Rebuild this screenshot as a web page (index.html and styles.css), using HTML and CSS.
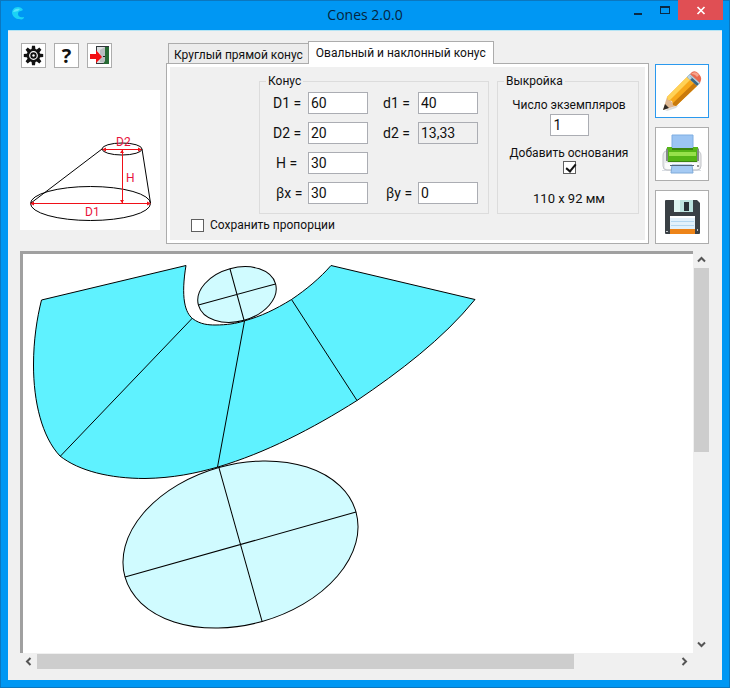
FILE: index.html
```html
<!DOCTYPE html>
<html lang="ru">
<head>
<meta charset="utf-8">
<meta name="viewport" content="width=device-width, initial-scale=1">
<title>Cones 2.0.0</title>
<link rel="stylesheet" href="styles.css">
</head>
<body>
<div class="window">
  <header class="titlebar">
    <svg class="app-icon" width="14" height="14" viewBox="0 0 14 14" aria-hidden="true">
      <path d="M6 0C2 0 0 3 0 6c1 4 4 6 7 6 3 1 5 0 5-2-4 1-6-1-6-3 0-2 1-3 3-3l2-1C10 1 8 0 6 0Z" fill="#1bd3f5"/>
      <path d="M1 5c1-3 4-4 7-3L6 4C5 4 3 5 1 5Z" fill="#59e6fa"/>
    </svg>
    <h1 class="title">Cones 2.0.0</h1>
    <div class="window-buttons">
      <button class="win-btn" type="button" aria-label="Свернуть">
        <svg width="10" height="10" viewBox="0 0 10 10"><path d="M1 8h8v2H1z" fill="#0a2a44"/></svg>
      </button>
      <button class="win-btn" type="button" aria-label="Развернуть">
        <svg width="10" height="10" viewBox="0 0 10 10"><path d="M0 1h10v8H0zM1 3v5h8V3z" fill="#0a2a44" fill-rule="evenodd"/></svg>
      </button>
      <button class="win-btn win-close" type="button" aria-label="Закрыть">
        <svg width="10" height="10" viewBox="0 0 10 10"><path d="M1.500 2l7 7M8.500 2l-7 7" stroke="#fff" stroke-width="1.700"/></svg>
      </button>
    </div>
  </header>

  <main class="client">
    <div class="controls">
      <div class="side">
        <div class="toolbar">
          <button class="tool-btn" type="button" aria-label="Настройки">
            <svg width="21" height="21" viewBox="0 0 21 21">
              <g fill="#111" transform="translate(10.500 10.500)">
                <g id="teeth"><path d="M-1.500-9.700h3l.6 4.700h-4.200zM-1.500 9.700h3l.6-4.700h-4.200z"/><path d="M-9.700-1.500v3l4.700.6v-4.200zM9.700-1.500v3l-4.700.6v-4.200z"/></g>
                <use href="#teeth" transform="rotate(45)"/>
                <circle r="6.800"/>
              </g>
              <circle cx="10.500" cy="10.500" r="3.800" fill="none" stroke="#fff" stroke-width="1.200"/>
              <circle cx="10.500" cy="10.500" r="1.200" fill="#fff"/>
            </svg>
          </button>
          <button class="tool-btn tool-help" type="button" aria-label="Справка">?</button>
          <button class="tool-btn" type="button" aria-label="Выход">
            <svg width="21" height="21" viewBox="0 0 21 21">
              <path d="M7 1h13v18H7z" fill="#30363a"/>
              <path d="M8 2h8v16H8z" fill="#dcdfe0"/>
              <path d="M11 5l5-3v16l-5-1z" fill="#b9bec1"/>
              <path d="M16 2h4v17h-6l2-3z" fill="#286b35"/>
              <path d="M1 9h6V5l6 7-6 6v-4H1z" fill="#f20d12"/>
              <path d="M14 11h2v1h-2z" fill="#222"/>
            </svg>
          </button>
        </div>
        <svg class="scheme" viewBox="0 0 140 140" role="img" aria-label="Схема конуса">
          <g class="scheme-lines">
            <ellipse cx="102" cy="59" rx="20" ry="6"/>
            <ellipse cx="70.500" cy="113.500" rx="60" ry="17"/>
            <path d="M82 59L11 113M122 59l8.500 54"/>
          </g>
          <path class="scheme-dims" d="M83 59.500h38M102 60v53M11 113.500h119"/>
          <path class="scheme-tips" d="M82 59.500l4-2v4zM122 59.500l-4-2v4zM10 113.500l4-2v4zM131 113.500l-4-2v4zM102 60l-2 3h4zM102 113l-2-3h4z"/>
          <g class="scheme-text">
            <text x="96" y="56">D2</text><text x="106" y="92">H</text><text x="65" y="126">D1</text>
          </g>
        </svg>
      </div>

      <section class="tabs">
        <div class="tab-row" role="tablist">
          <button class="tab" type="button" role="tab" aria-selected="false">Круглый прямой конус</button>
          <button class="tab tab-active" type="button" role="tab" aria-selected="true">Овальный и наклонный конус</button>
        </div>
        <div class="tab-panel" role="tabpanel">
          <div class="groups">
            <fieldset class="group group-cone">
              <legend>Конус</legend>
              <div class="fields">
                <label for="D1">D1 =</label><input id="D1" type="text" value="60">
                <label for="d1s">d1 =</label><input id="d1s" type="text" value="40">
                <label for="D2">D2 =</label><input id="D2" type="text" value="20">
                <label for="d2s">d2 =</label><input id="d2s" type="text" value="13,33" readonly>
                <label for="H">H =</label><input id="H" type="text" value="30">
                <label for="bx">βx =</label><input id="bx" type="text" value="30">
                <label for="by">βy =</label><input id="by" type="text" value="0">
              </div>
            </fieldset>
            <fieldset class="group group-pattern">
              <legend>Выкройка</legend>
              <div class="pattern">
                <label for="copies">Число экземпляров</label>
                <input id="copies" class="copies" type="text" value="1">
                <label class="bases-label" for="bases">Добавить основания</label>
                <input id="bases" class="check" type="checkbox" checked>
                <output class="sheet-size">110 x 92 мм</output>
              </div>
            </fieldset>
          </div>
          <label class="keep"><input class="check" type="checkbox">Сохранить пропорции</label>
        </div>
      </section>

      <div class="actions">
        <button class="action action-focus" type="button" aria-label="Построить">
          <svg width="44" height="44" viewBox="0 0 44 44">
            <path d="M5 41l11-4 3-1-3 3-9 3z" fill="#ddd"/>
            <path d="M3 41L7 28l9 9z" fill="#dfb893"/>
            <path d="M3 41l2-6 4 4z" fill="#2d2825"/>
            <path d="M7 28L27 8l10 9-21 20-3-1-1-4-4-1z" fill="#f7a81b"/>
            <path d="M7 28L27 8l3 3L10 31l-2 0z" fill="#ffd257"/>
            <path d="M13 34L34 14l3 3-21 20-3-1z" fill="#c97a0c"/>
            <path d="M27 8l3-3 10 9-3 3z" fill="#3c6681"/>
            <path d="M29 6l1-1 10 9-1 1zM27 8l2-2 3 3-2 2z" fill="#b9d3e2"/>
            <path d="M30 5l2-2q3-2 6 1 4 4 3 7l-1 3z" fill="#e8694f"/>
            <path d="M31 5q3-3 6-1l2 2-2 2q-2-3-6-3z" fill="#f7a38c"/>
          </svg>
        </button>
        <button class="action" type="button" aria-label="Печать">
          <svg width="44" height="44" viewBox="0 0 44 44">
            <path d="M2 38h39v1H2z" fill="#d9dde3"/>
            <path d="M3 24q0-5 4-5h30q4 0 4 5v10q0 4-4 4H7q-4 0-4-4z" fill="#e9eaec" stroke="#c2c4c8"/>
            <path d="M5 31h34v4q0 2-2 2H7q-2 0-2-2z" fill="#fbfbfb"/>
            <path d="M12 3h21v14H12z" fill="#9cc5f3" stroke="#7eaee2"/>
            <path d="M7 15h5v2h21v-2h5v13q0 2-2 2H9q-2 0-2-2z" fill="#55b516"/>
            <path d="M9 20h27v4H9z" fill="#97e14b"/>
            <path d="M12 16h21v2H12zM8 29h29v1H8z" fill="#3a840f"/>
            <path d="M6 16l2 2v11H6zM37 18l2-2v13h-2z" fill="#85898d"/>
            <path d="M12 33h20l1 8H11z" fill="#a5caf3" stroke="#7faad8"/>
            <path d="M10 33h24v1H10z" fill="#526477"/>
            <circle cx="38" cy="34" r="1" fill="#777"/>
          </svg>
        </button>
        <button class="action" type="button" aria-label="Сохранить">
          <svg width="44" height="44" viewBox="0 0 44 44">
            <path d="M6 5h31l3 3v30q0 1-1 1H6q-1 0-1-1V6q0-1 1-1z" fill="#3a4045"/>
            <path d="M14 5h19v12H14z" fill="#bde3df"/>
            <path d="M14 5h6v12h-6z" fill="#dff4f1"/>
            <path d="M24 7h5v9h-5z" fill="#283036"/>
            <path d="M10 21h25v18H10z" fill="#e3f1fb"/>
            <path d="M10 21h25v2H10z" fill="#fff"/>
            <path d="M11 26h23v1H11zM11 30h23v1H11z" fill="#b4d6ef"/>
            <path d="M10 34h25v5H10z" fill="#ed8419"/>
            <path d="M6 36h2v1H6zM37 34h1v2h-1z" fill="#c4c9cd"/>
          </svg>
        </button>
      </div>
    </div>

    <div class="viewer">
      <div class="canvas">
        <svg class="drawing" width="670" height="399" viewBox="23 254 670 399" role="img" aria-label="Выкройка конуса">
          <path class="cone" d="M186 265.500C183.500 280 183 293 184.500 302C186 311 189 315.500 192.500 318.500C200 324.500 209 325 215 325C227 325 236 323.500 244 321C262 316 275 309.500 291.500 299.500C307 289 320 278 331 265.500L475 299.500C443 339 399 372 357 400.500C312 429 265 453 218 467C195 473.500 173 478 145 478.500C110 478.500 79 471 60 456C42 437 33.500 402 33.500 365C33.500 340 37 318 41.500 300Z"/>
          <path class="line" d="M192.500 318L60.500 456M244.500 321L217.500 467M291.500 299.500L357 400.500"/>
          <g transform="translate(237 294.500) rotate(-15.300)"><ellipse class="base" rx="40" ry="26.700"/><path class="line" d="M-40 0h80M0-26.700v53.400"/></g>
          <g transform="translate(240.500 544.500) rotate(-15.700)"><ellipse class="base" rx="120" ry="80"/><path class="line" d="M-120 0h240M0-80v160"/></g>
        </svg>
      </div>
      <div class="scroll scroll-v">
        <button class="arrow" type="button" aria-label="Вверх"><svg width="9" height="9" viewBox="0 0 9 9"><path d="M1 6.500L4.500 3 8 6.500"/></svg></button>
        <div class="track"><div class="thumb"></div></div>
        <button class="arrow" type="button" aria-label="Вниз"><svg width="9" height="9" viewBox="0 0 9 9"><path d="M1 2.500L4.500 6 8 2.500"/></svg></button>
      </div>
      <div class="scroll scroll-h">
        <button class="arrow" type="button" aria-label="Влево"><svg width="9" height="9" viewBox="0 0 9 9"><path d="M6.500 1L3 4.500 6.500 8"/></svg></button>
        <div class="track"><div class="thumb"></div></div>
        <button class="arrow" type="button" aria-label="Вправо"><svg width="9" height="9" viewBox="0 0 9 9"><path d="M2.500 1L6 4.500 2.500 8"/></svg></button>
      </div>
    </div>
  </main>
</div>
</body>
</html>
```
FILE: styles.css
```css
* { box-sizing: border-box; }

body {
  margin: 0;
  font-family: Roboto, "Liberation Sans", sans-serif;
  font-size: 12px;
  color: #111;
}

button, input { font: inherit; color: inherit; margin: 0; padding: 0; }
svg { display: block; }

.window {
  display: flex;
  flex-direction: column;
  min-height: 100vh;
  padding: 0 8px 8px;
  background: #0097f3;
  box-shadow: inset 0 0 0 1px #0b77bf;
}

/* Title bar */
.titlebar {
  display: grid;
  grid-template-columns: 1fr auto 1fr;
  align-items: start;
  height: 30px;
}
.app-icon { margin: 7px 0 0 4px; }
.title {
  margin: 0;
  font: 14px/30px "Open Sans", sans-serif;
  color: #06243c;
}
.window-buttons { display: flex; justify-content: flex-end; }
.win-btn {
  display: grid;
  place-items: center;
  width: 27px;
  height: 20px;
  border: 0;
  background: none;
}
.win-close { width: 45px; margin-right: -1px; background: #e04f54; }

.client {
  flex: 1;
  display: flex;
  flex-direction: column;
  gap: 7px;
  padding: 11px 13px 11px 12px;
  background: #f0f0f0;
  border-top: 1px solid #b5e4f4;
}

.controls { display: flex; gap: 6px; align-items: stretch; }

/* Left column */
.side { width: 140px; }
.toolbar { display: flex; gap: 8px; padding: 1px; }
.tool-btn {
  display: grid;
  place-items: center;
  width: 25px;
  height: 25px;
  border: 1px solid #adadad;
  background: #fff;
}
.tool-help { font: bold 20px/22px "Open Sans", sans-serif; }
.scheme { width: 140px; margin-top: 21px; background: #fff; }
.scheme-lines { fill: none; stroke: #000; }
.scheme-dims { fill: none; stroke: #f01018; shape-rendering: crispEdges; }
.scheme-tips { fill: #f01018; }
.scheme-text { fill: #e8123c; font-size: 12px; }

/* Tabs */
.tabs { flex: 1; display: flex; flex-direction: column; }
.tab-row { display: flex; align-items: flex-end; padding-left: 2px; height: 21px; }
.tab {
  height: 20px;
  padding: 2px 5px 0;
  border: 1px solid #acacac;
  border-bottom: 0;
  background: #ececec;
  white-space: nowrap;
}
.tab-active {
  position: relative;
  z-index: 1;
  height: 23px;
  margin: 0 0 -1px -1px;
  padding: 0 7px;
  background: #fff;
}
.tab-panel {
  flex: 1;
  display: flex;
  flex-direction: column;
  padding: 9px 6px 4px 20px;
  border: 1px solid #acacac;
  box-shadow: inset 0 0 0 3px #fff;
}
.groups { display: flex; gap: 8px; padding: 0 3px 0 72px; }
.group {
  margin: 0;
  padding: 0;
  height: 141px;
  border: 1px solid #dcdcdc;
  min-width: 0;
}
.group legend { margin-left: 6px; padding: 0 2px; line-height: 17px; }
.group-cone { width: 230px; }
.group-pattern { flex: 1; }

.fields {
  display: grid;
  grid-template-columns: 35px 75px 35px 60px;
  row-gap: 8px;
  justify-content: start;
  align-items: center;
  padding: 2px 0 0 13px;
  font-size: 14px;
}
.fields label { white-space: nowrap; }
.fields input { width: 60px; }
.fields label[for="H"], .fields label[for="bx"], .fields label[for="by"] { padding-left: 3px; }
.fields label[for="H"], .fields label[for="bx"] { grid-column: 1; }

input[type="text"] {
  height: 22px;
  padding: 0 2px;
  border: 1px solid #abadb3;
  border-radius: 0;
  background: #fff;
  font-size: 14px;
}
input[readonly] { background: #f0f0f0; }

.pattern {
  display: flex;
  flex-direction: column;
  align-items: center;
  padding: 7px 0 0 2px;
  line-height: 16px;
  white-space: nowrap;
}
.pattern .copies { width: 39px; padding-left: 3px; margin-top: 1px; }
.bases-label { margin-top: 9px; }
.sheet-size { margin-top: 17px; font-size: 13px; }

.check {
  appearance: none;
  flex: none;
  width: 13px;
  height: 13px;
  border: 1px solid #5f5f5f;
  background: #fff;
}
.check:checked::before {
  content: "";
  display: block;
  width: 4px;
  height: 8px;
  margin: 0 0 0 4px;
  border: solid #111;
  border-width: 0 2px 2px 0;
  transform: rotate(40deg);
}
.keep {
  display: flex;
  align-items: center;
  gap: 6px;
  margin-top: 3px;
  padding-left: 4px;
  line-height: 16px;
}

/* Right column */
.actions { display: flex; flex-direction: column; gap: 9px; padding-top: 22px; }
.action {
  display: grid;
  place-items: center;
  width: 54px;
  height: 54px;
  border: 1px solid #adadad;
  background: #fff;
}
.action-focus { border-color: #2a99ee; }

/* Drawing area */
.viewer {
  flex: 1;
  display: grid;
  grid-template: minmax(0, 1fr) 16px / minmax(0, 1fr) 16px;
}
.canvas {
  overflow: hidden;
  border: solid #a0a0a0;
  border-width: 3px 0 0 3px;
  background: #fff;
}
.cone { fill: #5ff2ff; stroke: #000; }
.base { fill: #d0fbff; stroke: #000; }
.line { fill: none; stroke: #000; }

.scroll { display: flex; background: #f0f0f0; }
.scroll-v { flex-direction: column; padding-left: 1px; }
.scroll-h { padding-top: 1px; }
.arrow {
  display: grid;
  place-items: center;
  flex: none;
  width: 17px;
  height: 17px;
  border: 0;
  background: none;
}
.scroll-v .arrow { width: 15px; }
.scroll-h .arrow { height: 15px; }
.arrow path { fill: none; stroke: #555; stroke-width: 2; }
.track { flex: 1; }
.thumb { background: #cdcdcd; }
.scroll-v .thumb { height: 50%; }
.scroll-h .track { display: flex; }
.scroll-h .thumb { width: 84%; }
```
